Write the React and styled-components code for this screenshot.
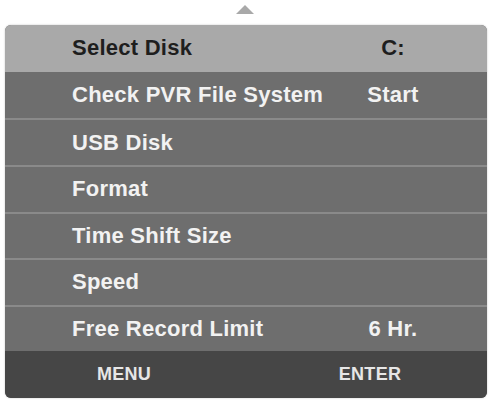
import React from "react";
import styled, { createGlobalStyle } from "styled-components";

const GlobalStyle = createGlobalStyle`
  html, body {
    margin: 0;
    padding: 0;
    background: #ffffff;
  }
  body {
    font-family: "Liberation Sans", Arial, sans-serif;
  }
`;

const Page = styled.div`
  width: 490px;
  height: 401px;
  display: flex;
  flex-direction: column;
  align-items: center;
  padding-top: 5px;
  box-sizing: border-box;
`;

const UpArrow = styled.div`
  width: 0;
  height: 0;
  border-left: 9px solid transparent;
  border-right: 9px solid transparent;
  border-bottom: 9px solid #a9a9a9;
  margin-bottom: 11px;
`;

const Panel = styled.div`
  width: 482px;
  height: 373px;
  margin-left: 2px;
  display: grid;
  grid-template-rows: repeat(8, 1fr);
  border-radius: 6px;
  overflow: hidden;
  background: #6e6e6e;
  box-shadow: 0 0 2px rgba(0, 0, 0, 0.25);
`;

const Row = styled.div`
  display: flex;
  align-items: center;
  padding-left: 67px;
  background: ${(p) => (p.$active ? "#a9a9a9" : "#6e6e6e")};
  color: ${(p) => (p.$active ? "#1e1e1e" : "#f2f2f2")};
  border-top: ${(p) => (p.$first || p.$afterActive ? "none" : "2px solid #8a8a8a")};
  font-size: 22px;
  font-weight: bold;
  letter-spacing: 0.25px;
`;

const Label = styled.span`
  width: 276px;
  white-space: nowrap;
`;

const Value = styled.span`
  width: 90px;
  text-align: center;
  white-space: nowrap;
`;

const Footer = styled.div`
  display: flex;
  align-items: center;
  background: #464646;
  color: #e6e6e6;
  font-size: 18px;
  font-weight: bold;
  letter-spacing: 0.3px;
`;

const FooterKey = styled.span`
  width: ${(p) => p.$w}px;
  text-align: center;
`;

const items = [
  { label: "Select Disk", value: "C:" },
  { label: "Check PVR File System", value: "Start" },
  { label: "USB Disk", value: "" },
  { label: "Format", value: "" },
  { label: "Time Shift Size", value: "" },
  { label: "Speed", value: "" },
  { label: "Free Record Limit", value: "6 Hr." },
];

export default function App() {
  return (
    <>
      <GlobalStyle />
      <Page>
        <UpArrow />
        <Panel>
          {items.map((it, i) => (
            <Row key={it.label} $active={i === 0} $first={i === 0} $afterActive={i === 1}>
              <Label>{it.label}</Label>
              <Value>{it.value}</Value>
            </Row>
          ))}
          <Footer>
            <FooterKey $w={238}>MENU</FooterKey>
            <FooterKey $w={254}>ENTER</FooterKey>
          </Footer>
        </Panel>
      </Page>
    </>
  );
}
